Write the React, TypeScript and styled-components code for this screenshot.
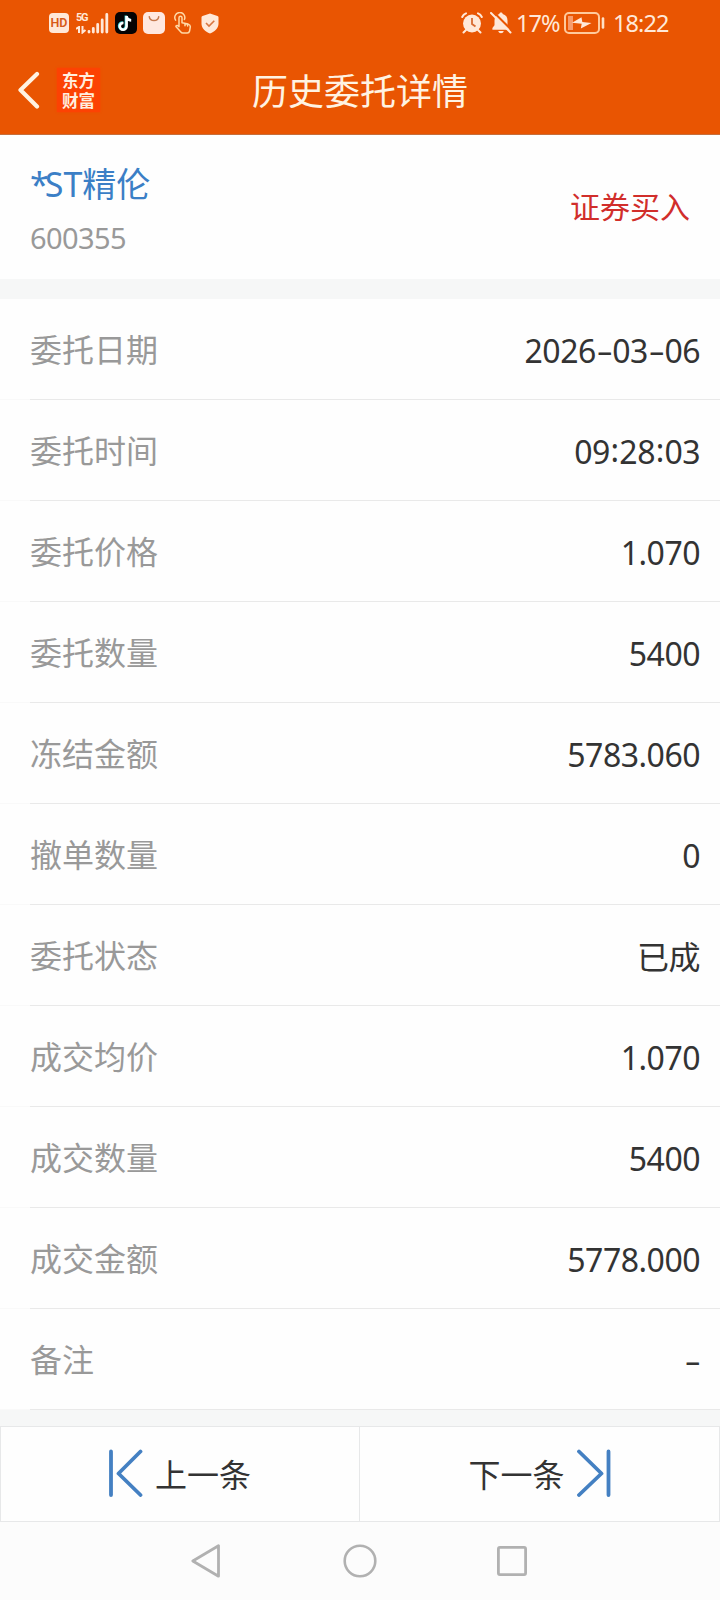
import React from 'react';
import styled, { createGlobalStyle } from 'styled-components';

const GlobalStyle = createGlobalStyle`
  *, *::before, *::after { box-sizing: border-box; }
  body {
    margin: 0;
    background: #fefefe;
    font-family: "Noto Sans", "Noto Sans CJK SC", sans-serif;
  }
`;

const Screen = styled.div`
  width: 720px;
  height: 1600px;
  display: flex;
  flex-direction: column;
  overflow: hidden;
  background: #fefefe;
`;

const Top = styled.header`
  height: 135px;
  background: #e95502;
  border-bottom: 1px solid #c66f3c;
  color: #fff3e2;
`;

const StatusBar = styled.div`
  height: 46px;
  display: flex;
  justify-content: space-between;
  padding: 0 49px 0 49px;
  color: #ffe8d8;
`;

const StatusGroup = styled.div`
  display: flex;
  align-items: center;
`;

const StatusIcon = styled.svg<{ $gap?: number }>`
  display: block;
  flex: none;
  margin-left: ${(p) => p.$gap ?? 0}px;
`;

const HdBadge = styled.span`
  width: 20px;
  height: 20px;
  border-radius: 4px;
  background: #ffe8d8;
  color: #d75a18;
  font: 600 12.5px/20px Roboto, sans-serif;
  text-align: center;
`;

const Network = styled.span`
  width: 11px;
  height: 22px;
  margin-left: 7px;
  display: flex;
  flex-direction: column;
  justify-content: space-between;
  font: 700 11px/11px Roboto, sans-serif;
  letter-spacing: -1.2px;
`;

const StatusText = styled.span<{ $gap: number; $width: number }>`
  width: ${(p) => p.$width}px;
  margin-left: ${(p) => p.$gap}px;
  font-size: 23.5px;
  line-height: 46px;
  letter-spacing: -0.9px;
  white-space: nowrap;
`;

const TitleBar = styled.div`
  height: 88px;
  display: grid;
  grid-template-columns: 200px 1fr 200px;
  align-items: center;
`;

const TitleLeft = styled.div`
  display: flex;
  align-items: center;
  padding-left: 17px;
`;

const Brand = styled.div`
  width: 43px;
  height: 44px;
  margin-left: 16px;
  padding: 4px 0 0 5px;
  background: #fc4203;
  box-shadow: 0 0 2px #fc4203;
  color: #ffeede;
`;

const BrandLine = styled.div`
  height: 19.5px;
  font: 700 16.5px/19.5px "Liberation Sans", "Noto Sans CJK SC", sans-serif;
`;

const Title = styled.h1`
  margin: 0;
  padding-top: 4px;
  font-size: 36px;
  line-height: 48px;
  font-weight: 400;
  text-align: center;
  white-space: nowrap;
`;

const Stock = styled.section`
  height: 144px;
  display: flex;
  align-items: center;
  justify-content: space-between;
  padding: 0 30px;
`;

const StockInfo = styled.div`
  padding-top: 7px;
`;

const StockName = styled.div`
  color: #3b7fc6;
  font-size: 34px;
  line-height: 54px;
`;

const Star = styled.span`
  letter-spacing: -4px;
`;

const StockCode = styled.div`
  color: #999;
  font-size: 29px;
  line-height: 54px;
  letter-spacing: -0.6px;
`;

const Side = styled.div`
  color: #d12e2b;
  font-size: 30px;
  line-height: 40px;
`;

const Divider = styled.div<{ $height: number }>`
  height: ${(p) => p.$height}px;
  flex: none;
  background: #f6f7f7;
`;

const Row = styled.div`
  height: 101px;
  flex: none;
  display: flex;
  align-items: center;
  justify-content: space-between;
  padding: 2px 20px 0 30px;
  border-bottom: 1px solid;
  border-image: linear-gradient(to right, #f9f9f9 31px, #e9e9e9 31px) 1;
`;

const Label = styled.span`
  color: #999;
  font-size: 32px;
  line-height: 48px;
`;

const Value = styled.span`
  padding-top: 1px;
  color: #333;
  font-size: 32px;
  line-height: 48px;
  letter-spacing: -0.5px;
`;

const Dash = styled.span`
  display: inline-block;
  width: 16.5px;
  text-align: center;
  transform: scaleX(1.6);
`;

const Colon = styled.span`
  position: relative;
  top: -2px;
  margin: 0 0.7px;
`;

const Pager = styled.div`
  height: 96px;
  flex: none;
  display: grid;
  grid-template-columns: 359px 359px;
  background: #fefefe;
  border: 1px solid #e7e8e9;
`;

const PagerButton = styled.button`
  border: 0;
  padding: 0 0 2px;
  background: none;
  display: flex;
  align-items: center;
  justify-content: center;
  gap: 12px;
  font: 400 32px/48px "Noto Sans", "Noto Sans CJK SC", sans-serif;
  color: #333;

  &:first-child {
    border-right: 1px solid #e7e8e9;
  }
`;

const PagerText = styled.span`
  padding-top: 4px;
`;

const NavBar = styled.nav`
  flex: 1;
  display: flex;
  justify-content: center;
  align-items: center;
  gap: 118px;
  background: #fcfcfc;
`;

const rows = [
  ['委托日期', '2026-03-06'],
  ['委托时间', '09:28:03'],
  ['委托价格', '1.070'],
  ['委托数量', '5400'],
  ['冻结金额', '5783.060'],
  ['撤单数量', '0'],
  ['委托状态', '已成'],
  ['成交均价', '1.070'],
  ['成交数量', '5400'],
  ['成交金额', '5778.000'],
  ['备注', '-'],
];

const withMarks = (text: string) =>
  text.split(/([-:])/).map((part, i) => {
    if (part === '-') return <Dash key={i}>-</Dash>;
    if (part === ':') return <Colon key={i}>:</Colon>;
    return part;
  });

const SkipIcon = ({ next = false }: { next?: boolean }) => (
  <svg width="34" height="48" viewBox="0 0 34 48" fill="none" stroke="#4480c2" strokeWidth="3.8" strokeLinecap="round" strokeLinejoin="round">
    {next ? <path d="M2 2.5 24.5 24.5 2 46M31.5 2.5V46" /> : <path d="M2 2.5V46M31.5 2.5 9.5 24.5 31.5 46" />}
  </svg>
);

export default function App() {
  return (
    <>
      <GlobalStyle />
      <Screen>
        <Top>
          <StatusBar>
            <StatusGroup>
              <HdBadge>HD</HdBadge>
              <Network>
                5G
                <svg width="11" height="8" viewBox="0 0 11 8" fill="none" stroke="currentColor" strokeWidth="2">
                  <path d="M0 3 3 1v6M6.5 0v6.5L9.5 4" />
                </svg>
              </Network>
              <StatusIcon width="22" height="22" viewBox="0 0 22 22" stroke="currentColor" strokeWidth="2.8" strokeLinecap="round">
                <path d="M2 19.5v.5M6.3 16.5V20M10.7 12.5V20M15.2 8V20M19.8 2.5V20" />
              </StatusIcon>
              <StatusIcon $gap={6} width="22" height="22" viewBox="0 0 22 22">
                <rect width="22" height="22" rx="5" fill="#050303" />
                <g fill="none" strokeWidth="2.6">
                  <path d="M11.3 3.7v10.6a3.4 3.4 0 1 1-3.1-3.5M11.3 4c.3 2.6 2 4.1 4.6 4.2" stroke="#43d8dc" transform="translate(-.4 -.3)" />
                  <path d="M11.3 3.7v10.6a3.4 3.4 0 1 1-3.1-3.5M11.3 4c.3 2.6 2 4.1 4.6 4.2" stroke="#fff" transform="translate(.3 .2)" />
                </g>
              </StatusIcon>
              <StatusIcon $gap={6} width="22" height="22" viewBox="0 0 22 22">
                <rect width="22" height="22" rx="5" fill="#ffe8e0" />
                <path d="M6.3 4.8c1 5 8.4 5 9.4 0" fill="none" stroke="#c4794f" strokeWidth="1.5" strokeLinecap="round" />
              </StatusIcon>
              <StatusIcon $gap={8} width="19" height="22" viewBox="0 0 19 22" fill="none" stroke="#ffd9a6" strokeWidth="1.5" strokeLinecap="round" strokeLinejoin="round">
                <path d="M2.6 8.2A5 5 0 1 1 11.4 7.5M6 14V5.700a1.500 1.500 0 0 1 3 0v5.100l6.200 1.300c1.500.4 2.200 1.200 2.100 2.700l-.7 4.200c-.3 1.300-1 2-2.300 2H10c-1 0-1.800-.4-2.400-1.200l-4.500-5c-.5-.8.4-1.700 1.300-1.300L6 14.600M12 11.500v2.300M14.600 12v2" />
              </StatusIcon>
              <StatusIcon $gap={9} width="18" height="21" viewBox="0 0 18 21">
                <path d="M9 .4 16.500 3c.6.200 1 .7 1 1.300v6.500c0 4.500-3.500 7.500-8.500 9.800-5-2.300-8.500-5.300-8.500-9.800V4.300c0-.6.4-1.100 1-1.300z" fill="#ffe8d8" />
                <path d="m5 10 3 3 5.300-5.300" fill="none" stroke="#d87540" strokeWidth="1.6" />
              </StatusIcon>
            </StatusGroup>
            <StatusGroup>
              <StatusIcon width="22" height="22" viewBox="0 0 22 22" fill="none" stroke="currentColor">
                <path d="M1.200 5A7 7 0 0 1 5 1.400M17 1.400A7 7 0 0 1 20.800 5M5 18l-2.500 2.500M17 18l2.500 2.500" strokeWidth="2" strokeLinecap="round" />
                <circle cx="11" cy="11.500" r="9" fill="currentColor" stroke="none" />
                <path d="M11 6v6l3.500 2.500" stroke="#d76a31" strokeWidth="1.8" />
              </StatusIcon>
              <StatusIcon $gap={7} width="22" height="22" viewBox="0 0 22 22">
                <path d="M11 .6c.8 0 1.500.5 1.700 1.300 3.200.8 4.800 3.200 4.800 6.600v4.700l2.100 2.800v1.700H2.400V16l2.100-2.800V8.500c0-3.400 1.600-5.800 4.800-6.600C9.500 1.100 10.200.6 11 .6zM8.300 19h5.400c-.5 3-4.900 3-5.400 0z" fill="currentColor" />
                <path d="m3-.5 20 20" stroke="#e95502" strokeWidth="2" />
                <path d="m1 1 19.500 19.500" stroke="currentColor" strokeWidth="2" strokeLinecap="round" />
              </StatusIcon>
              <StatusText $gap={4} $width={46}>17%</StatusText>
              <StatusIcon $gap={1} width="42" height="22" viewBox="0 0 42 22">
                <rect x="2" y="1" width="34" height="20" rx="4" fill="none" stroke="#ffca9c" strokeWidth="2" />
                <path d="M5 4h5v14H5z" fill="#f79b6c" />
                <path d="m18.500 5.200-9.500 5.500 9.700 1.100-.9 4.700 10.700-5.600-9.200-.9z" fill="#ffe8d8" />
                <path d="M40 6.500v9" stroke="#ffe0c4" strokeWidth="2.6" strokeLinecap="round" />
              </StatusIcon>
              <StatusText $gap={8} $width={58}>18:22</StatusText>
            </StatusGroup>
          </StatusBar>
          <TitleBar>
            <TitleLeft>
              <svg width="24" height="38" viewBox="0 0 24 38" fill="none" stroke="#fff3e2" strokeWidth="4.2" strokeLinecap="round" strokeLinejoin="round">
                <path d="M20 3 3.500 19 20 35.500" />
              </svg>
              <Brand>
                <BrandLine>东方</BrandLine>
                <BrandLine>财富</BrandLine>
              </Brand>
            </TitleLeft>
            <Title>历史委托详情</Title>
          </TitleBar>
        </Top>
        <Stock>
          <StockInfo>
            <StockName><Star>*</Star>ST精伦</StockName>
            <StockCode>600355</StockCode>
          </StockInfo>
          <Side>证券买入</Side>
        </Stock>
        <Divider $height={20} />
        {rows.map(([label, value]) => (
          <Row key={label}>
            <Label>{label}</Label>
            <Value>{withMarks(value)}</Value>
          </Row>
        ))}
        <Divider $height={16} />
        <Pager>
          <PagerButton><SkipIcon /><PagerText>上一条</PagerText></PagerButton>
          <PagerButton><PagerText>下一条</PagerText><SkipIcon next /></PagerButton>
        </Pager>
        <NavBar>
          <svg width="34" height="36" viewBox="0 0 34 36" fill="none" stroke="#b1b1b1" strokeWidth="2.8" strokeLinejoin="round">
            <path d="M27.5 2.8v30.4L1.8 18z" />
          </svg>
          <svg width="34" height="36" viewBox="0 0 34 36" fill="none" stroke="#b1b1b1" strokeWidth="2.6">
            <circle cx="17" cy="18" r="15.3" />
          </svg>
          <svg width="34" height="36" viewBox="0 0 34 36" fill="none" stroke="#b1b1b1" strokeWidth="2.8">
            <rect x="3.4" y="4.4" width="27.2" height="27.2" rx="1.5" />
          </svg>
        </NavBar>
      </Screen>
    </>
  );
}
